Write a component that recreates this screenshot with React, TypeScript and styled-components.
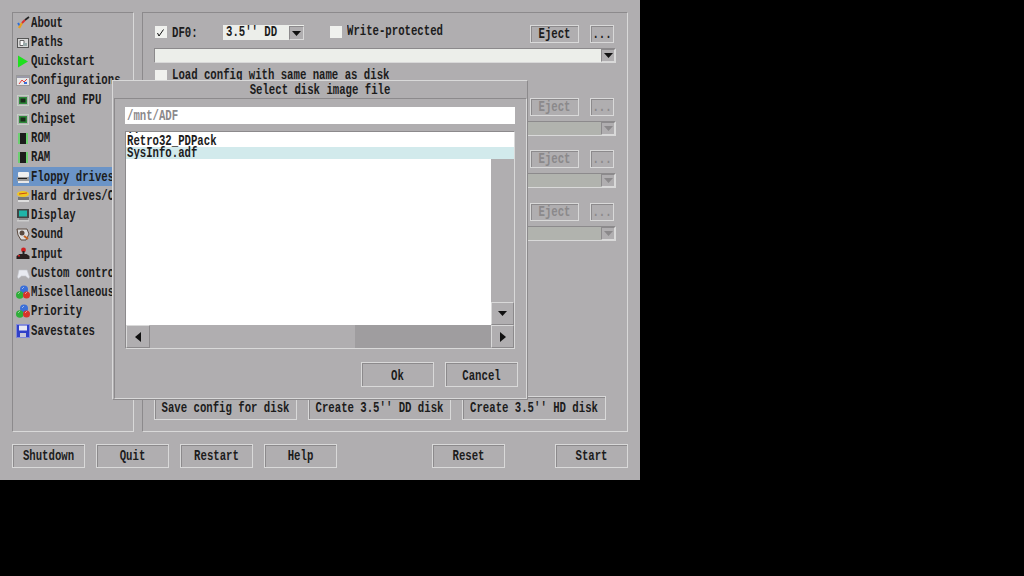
import React from 'react';
import styled, { createGlobalStyle, css } from 'styled-components';

const GRAY = '#b0aeb0';
const DARK = '#8c8a8c';
const LIGHT = '#d9d9d9';

const GlobalStyle = createGlobalStyle`
  html, body { margin: 0; padding: 0; background: #000; height: 100%; overflow: hidden; }
  * { box-sizing: border-box; }
`;

// Guisan font look: narrow, tall, bitmap-like
const Label = styled.span<{ $muted?: boolean }>`
  display: inline-block;
  font-family: "Liberation Mono", monospace;
  font-weight: bold;
  font-size: 10.67px;
  line-height: 12px;
  white-space: pre;
  color: ${(p) => (p.$muted ? '#8b898b' : '#1c1c1c')};
  transform: scaleY(1.4);
`;

const etched = css`
  border-top: 1px solid ${DARK};
  border-left: 1px solid ${DARK};
  border-right: 1px solid ${LIGHT};
  border-bottom: 1px solid ${LIGHT};
`;

const Screen = styled.div`
  position: relative;
  width: 640px;
  height: 480px;
  background: ${GRAY};
  padding: 12px;
  display: flex;
  flex-direction: column;
  overflow: hidden;
`;

const Main = styled.div`
  display: flex;
  gap: 8px;
  height: 420px;
`;

const Sidebar = styled.div`
  ${etched}
  width: 122px;
  overflow: hidden;
`;

const NavItem = styled.div<{ $active?: boolean }>`
  display: flex;
  align-items: center;
  gap: 1px;
  height: 19.25px;
  padding-left: 3px;
  background: ${(p) => (p.$active ? '#6b94c7' : 'transparent')};
  white-space: nowrap;
  svg { flex: none; }
`;

const Content = styled.div`
  ${etched}
  flex: 1;
  display: flex;
  flex-direction: column;
  padding: 12px 11px 11px 11px;
`;

const Drive = styled.div`
  display: flex;
  flex-direction: column;
  gap: 5px;
  margin-bottom: 14.5px;
`;

const DriveRow = styled.div`
  display: flex;
  align-items: flex-start;
  height: 18px;
  padding-right: 2px;
`;

const Check = styled.div`
  flex: none;
  width: 12px;
  height: 12px;
  margin: 1px 5px 0 1px;
  background: #f0f1ee;
  display: flex;
  align-items: center;
  justify-content: center;
`;

const DriveName = styled.div`
  width: 51px;
  height: 14px;
  line-height: 12px;
`;

const Select = styled.div`
  width: 81px;
  height: 15px;
  display: flex;
  justify-content: space-between;
  align-items: stretch;
  background: #eceeea;
  padding: 1px 0 0 3px;
  line-height: 12px;
`;

const ArrowBox = styled.div<{ $w?: number }>`
  flex: none;
  width: ${(p) => p.$w ?? 15}px;
  background: ${GRAY};
  ${etched}
  display: flex;
  align-items: center;
  justify-content: center;
`;

const Protect = styled.div`
  display: flex;
  margin-left: 25px;
  flex: 1;
  line-height: 14px;
`;

const Btn = styled.div<{ $w: number; $h?: number }>`
  flex: none;
  width: ${(p) => p.$w}px;
  height: ${(p) => p.$h ?? 24}px;
  border: 1px solid ${LIGHT};
  box-shadow: inset 1px 1px 0 ${DARK};
  display: flex;
  align-items: center;
  justify-content: center;
`;

const Combo = styled.div<{ $off?: boolean }>`
  height: 15px;
  display: flex;
  justify-content: flex-end;
  background: ${(p) => (p.$off ? '#b1b3ae' : '#eceeea')};
  ${etched}
`;

const LoadRow = styled.div`
  display: flex;
  height: 14px;
  margin-top: 1px;
  line-height: 14px;
`;

const DiskActions = styled.div`
  display: flex;
  gap: 11px;
  margin-top: auto;
`;

const Footer = styled.div`
  display: flex;
  gap: 11px;
  margin-top: 12px;
`;

const Spacer = styled.div<{ $w?: number }>`
  ${(p) => (p.$w ? `width: ${p.$w - 22}px;` : 'flex: 1;')}
`;

const Dialog = styled.div`
  position: absolute;
  left: 112px;
  top: 80px;
  width: 416px;
  height: 320px;
  background: ${GRAY};
  border-top: 1px solid ${LIGHT};
  border-left: 1px solid ${LIGHT};
  border-right: 1px solid ${DARK};
  border-bottom: 1px solid ${DARK};
  display: flex;
  flex-direction: column;
`;

const DialogTitle = styled.div`
  height: 17px;
  text-align: center;
  line-height: 14px;
  flex: none;
`;

const DialogBody = styled.div`
  flex: 1;
  margin-left: 1px;
  border-top: 1px solid ${DARK};
  border-left: 1px solid ${DARK};
  border-right: 1px solid ${LIGHT};
  border-bottom: 1px solid ${LIGHT};
  padding: 8px 8px 11px 9px;
  display: flex;
  flex-direction: column;
`;

const PathInput = styled.div`
  height: 17px;
  width: 390px;
  margin-left: 1px;
  background: #fff;
  padding-left: 2px;
  line-height: 14px;
  flex: none;
`;

const FileList = styled.div`
  width: 390px;
  height: 218px;
  margin: 7px 0 0 1px;
  flex: none;
  ${etched}
  display: flex;
  flex-direction: column;
  background: #fff;
`;

const Rows = styled.div`
  height: 27px;
  flex: none;
  overflow: hidden;
  display: flex;
  flex-direction: column;
  justify-content: flex-end;
`;

const FileRow = styled.div<{ $selected?: boolean }>`
  height: 12px;
  flex: none;
  display: flex;
  padding-left: 1px;
  background: ${(p) => (p.$selected ? '#d2eaec' : 'transparent')};
`;

const ListMiddle = styled.div`
  flex: 1;
  display: flex;
  justify-content: flex-end;
`;

const VScroll = styled.div`
  width: 23px;
  background: ${GRAY};
  display: flex;
  flex-direction: column;
  justify-content: flex-end;
`;

const HScroll = styled.div`
  height: 23px;
  flex: none;
  display: flex;
  background: ${GRAY};
`;

const HTrack = styled.div`
  flex: 1;
  display: flex;
  justify-content: flex-end;
`;

const HThumb = styled.div`
  width: 136px;
  background: #9f9d9f;
`;

const ScrollBtn = styled.div<{ $w: number }>`
  flex: none;
  width: ${(p) => p.$w}px;
  height: 23px;
  background: ${GRAY};
  border-top: 1px solid ${LIGHT};
  border-left: 1px solid ${LIGHT};
  border-right: 1px solid ${DARK};
  border-bottom: 1px solid ${DARK};
  display: flex;
  align-items: center;
  justify-content: center;
`;

const DialogButtons = styled.div`
  display: flex;
  justify-content: flex-end;
  gap: 11px;
  margin-top: 13px;

  ${Label} {
    margin-top: 2px;
  }
`;

const Down = ({ color = '#111' }: { color?: string }) => (
  <svg width="9" height="5" viewBox="0 0 9 5"><path d="M0 0h9L4.5 5z" fill={color} /></svg>
);
const Side = ({ left }: { left?: boolean }) => (
  <svg width="6" height="10" viewBox="0 0 6 10"><path d={left ? 'M6 0v10L0 5z' : 'M0 0v10l6-5z'} fill="#111" /></svg>
);

const Balls = () => (
  <>
    <circle cx="8" cy="4.5" r="4" fill="#3a6fd8" />
    <circle cx="3.8" cy="10" r="3.8" fill="#2fae3a" />
    <circle cx="10.5" cy="10" r="3.5" fill="#d8342a" />
    <path d="M6.5 3.5l1-1M2.5 8.5l1-1M9.5 8.5l1-1" stroke="#fff" />
  </>
);

const Chip = () => (
  <>
    <rect x="1.5" y="2.5" width="11" height="10" fill="none" stroke="#d8f4d8" strokeDasharray="1 1" />
    <rect x="3" y="4" width="8" height="7" fill="#2e8a3a" />
    <rect x="4.5" y="5.5" width="5" height="4" fill="#1a2a1a" />
  </>
);

const Ram = () => (
  <>
    <rect x="2" y="2" width="2" height="11" fill="#6cd070" />
    <rect x="4" y="2" width="6" height="11" fill="#1c1c1c" />
    <rect x="10" y="2" width="2" height="11" fill="#6cd070" />
  </>
);

const icons: Record<string, React.ReactNode> = {
  about: (
    <>
      <path d="M2 7l2 3" stroke="#2a6fdc" strokeWidth="2" />
      <path d="M3 12l3-5" stroke="#e8a020" strokeWidth="2.4" />
      <path d="M6 7l3-3" stroke="#d83030" strokeWidth="2" />
      <path d="M9 4l4-3" stroke="#222" strokeWidth="1.6" />
    </>
  ),
  paths: (
    <>
      <rect x="1.5" y="3.5" width="11" height="9" fill="#d8d8d8" stroke="#555" />
      <path d="M4 5.5h4v5H4z" fill="#fff" stroke="#666" />
      <path d="M7 8h4v3H7z" fill="#9aa" />
    </>
  ),
  quick: <path d="M2 1.5l10 6-10 6z" fill="#1fe01f" />,
  config: (
    <>
      <rect x="0.5" y="2.5" width="13" height="10" fill="#e8e8e8" stroke="#999" />
      <rect x="1" y="3" width="12" height="2" fill="#9a9aa8" />
      <path d="M3 11l3-4 2 2 3-3" stroke="#e04040" fill="none" />
      <rect x="8" y="9" width="3" height="2" fill="#3a6fd8" />
    </>
  ),
  chip: <Chip />,
  ram: <Ram />,
  floppy: (
    <>
      <rect x="2" y="2" width="11" height="5" rx="1" fill="#f0f0f0" />
      <rect x="1" y="7" width="12" height="4" fill="#999" />
      <rect x="2" y="8" width="9" height="1" fill="#222" />
      <rect x="2" y="11" width="11" height="2" fill="#e8e8e8" />
    </>
  ),
  hard: (
    <>
      <ellipse cx="7" cy="5" rx="6" ry="3" fill="#f0c820" />
      <path d="M3 5l8-1" stroke="#c84818" />
      <rect x="2" y="8" width="11" height="3" fill="#777" />
      <rect x="2" y="11" width="11" height="2" fill="#ddd" />
    </>
  ),
  display: (
    <>
      <rect x="1" y="1" width="12" height="9" fill="#444" />
      <rect x="3" y="2.5" width="8" height="6" fill="#1fb5a8" />
      <rect x="3" y="10" width="9" height="2" fill="#888" />
      <rect x="1" y="12" width="12" height="1.5" fill="#ccc" />
    </>
  ),
  sound: (
    <>
      <path d="M1 2h10l2 5-3 6H5L2 8z" fill="#ddd" stroke="#5a4a40" />
      <circle cx="6" cy="6" r="2.5" fill="#5a4a40" />
      <path d="M8 9l4 3" stroke="#c86420" strokeWidth="2" />
    </>
  ),
  input: (
    <>
      <circle cx="7.5" cy="3" r="2.4" fill="#d02020" />
      <rect x="6.5" y="4" width="2" height="5" fill="#222" />
      <path d="M0.5 9l3-2h7l3 2v3h-13z" fill="#2a2020" />
      <rect x="2" y="8" width="2" height="1.5" fill="#d02020" />
    </>
  ),
  custom: (
    <path d="M3 4h8l2.5 7-1 1.5-3-2.5H5.5l-3 2.5-1-1.5z" fill="#e8eaf0" stroke="#c4c6cc" strokeWidth=".6" />
  ),
  misc: <Balls />,
  save: (
    <>
      <rect x="1" y="1" width="12" height="12" fill="#3040c8" />
      <rect x="3" y="1.5" width="8" height="5" fill="#e8e8f4" />
      <rect x="4" y="9" width="6" height="4" fill="#c8c8d8" />
      <rect x="0.5" y="0.5" width="13" height="13" fill="none" stroke="#8088d8" />
    </>
  ),
};

const NAV: [string, string][] = [
  ['about', 'About'],
  ['paths', 'Paths'],
  ['quick', 'Quickstart'],
  ['config', 'Configurations'],
  ['chip', 'CPU and FPU'],
  ['chip', 'Chipset'],
  ['ram', 'ROM'],
  ['ram', 'RAM'],
  ['floppy', 'Floppy drives'],
  ['hard', 'Hard drives/CD'],
  ['display', 'Display'],
  ['sound', 'Sound'],
  ['input', 'Input'],
  ['custom', 'Custom controls'],
  ['misc', 'Miscellaneous'],
  ['misc', 'Priority'],
  ['save', 'Savestates'],
];

const DriveBlock = ({ name, off }: { name: string; off?: boolean }) => (
  <Drive>
    <DriveRow>
      <Check>
        <svg width="10" height="10" viewBox="0 0 10 10">
          <path d="M1.5 6l1.5 3 4.5-6.5" stroke="#111" strokeWidth="1" fill="none" />
        </svg>
      </Check>
      <DriveName><Label>{name}</Label></DriveName>
      <Select>
        <Label>3.5'' DD</Label>
        <ArrowBox><Down /></ArrowBox>
      </Select>
      <Protect>
        <Check />
        <Label>Write-protected</Label>
      </Protect>
      <Btn $w={49} $h={18}><Label $muted={off}>Eject</Label></Btn>
      <Spacer $w={33} />
      <Btn $w={24} $h={18}><Label $muted={off}>...</Label></Btn>
    </DriveRow>
    <Combo $off={off}>
      <ArrowBox $w={14}><Down color={off ? '#8b898b' : '#111'} /></ArrowBox>
    </Combo>
    {!off && (
      <LoadRow>
        <Check />
        <Label>Load config with same name as disk</Label>
      </LoadRow>
    )}
  </Drive>
);

export default function App() {
  return (
    <Screen>
      <GlobalStyle />
      <Main>
        <Sidebar>
          {NAV.map(([icon, text]) => (
            <NavItem key={text} $active={text === 'Floppy drives'}>
              <svg width="14" height="14" viewBox="0 0 14 14">{icons[icon]}</svg>
              <Label>{text}</Label>
            </NavItem>
          ))}
        </Sidebar>
        <Content>
          <DriveBlock name="DF0:" />
          <DriveBlock name="DF1:" off />
          <DriveBlock name="DF2:" off />
          <DriveBlock name="DF3:" off />
          <DiskActions>
            <Btn $w={143}><Label>Save config for disk</Label></Btn>
            <Btn $w={143}><Label>Create 3.5'' DD disk</Label></Btn>
            <Btn $w={144}><Label>Create 3.5'' HD disk</Label></Btn>
          </DiskActions>
        </Content>
      </Main>
      <Footer>
        <Btn $w={73}><Label>Shutdown</Label></Btn>
        <Btn $w={73}><Label>Quit</Label></Btn>
        <Btn $w={73}><Label>Restart</Label></Btn>
        <Btn $w={73}><Label>Help</Label></Btn>
        <Spacer $w={95} />
        <Btn $w={73}><Label>Reset</Label></Btn>
        <Spacer />
        <Btn $w={73}><Label>Start</Label></Btn>
      </Footer>
      <Dialog>
        <DialogTitle><Label>Select disk image file</Label></DialogTitle>
        <DialogBody>
          <PathInput><Label $muted>/mnt/ADF</Label></PathInput>
          <FileList>
            <Rows>
              <FileRow><Label>..</Label></FileRow>
              <FileRow><Label>Retro32_PDPack</Label></FileRow>
              <FileRow $selected><Label>SysInfo.adf</Label></FileRow>
            </Rows>
            <ListMiddle>
              <VScroll>
                <ScrollBtn $w={23}><Down /></ScrollBtn>
              </VScroll>
            </ListMiddle>
            <HScroll>
              <ScrollBtn $w={24}><Side left /></ScrollBtn>
              <HTrack><HThumb /></HTrack>
              <ScrollBtn $w={23}><Side /></ScrollBtn>
            </HScroll>
          </FileList>
          <DialogButtons>
            <Btn $w={73} $h={25}><Label>Ok</Label></Btn>
            <Btn $w={73} $h={25}><Label>Cancel</Label></Btn>
          </DialogButtons>
        </DialogBody>
      </Dialog>
    </Screen>
  );
}
